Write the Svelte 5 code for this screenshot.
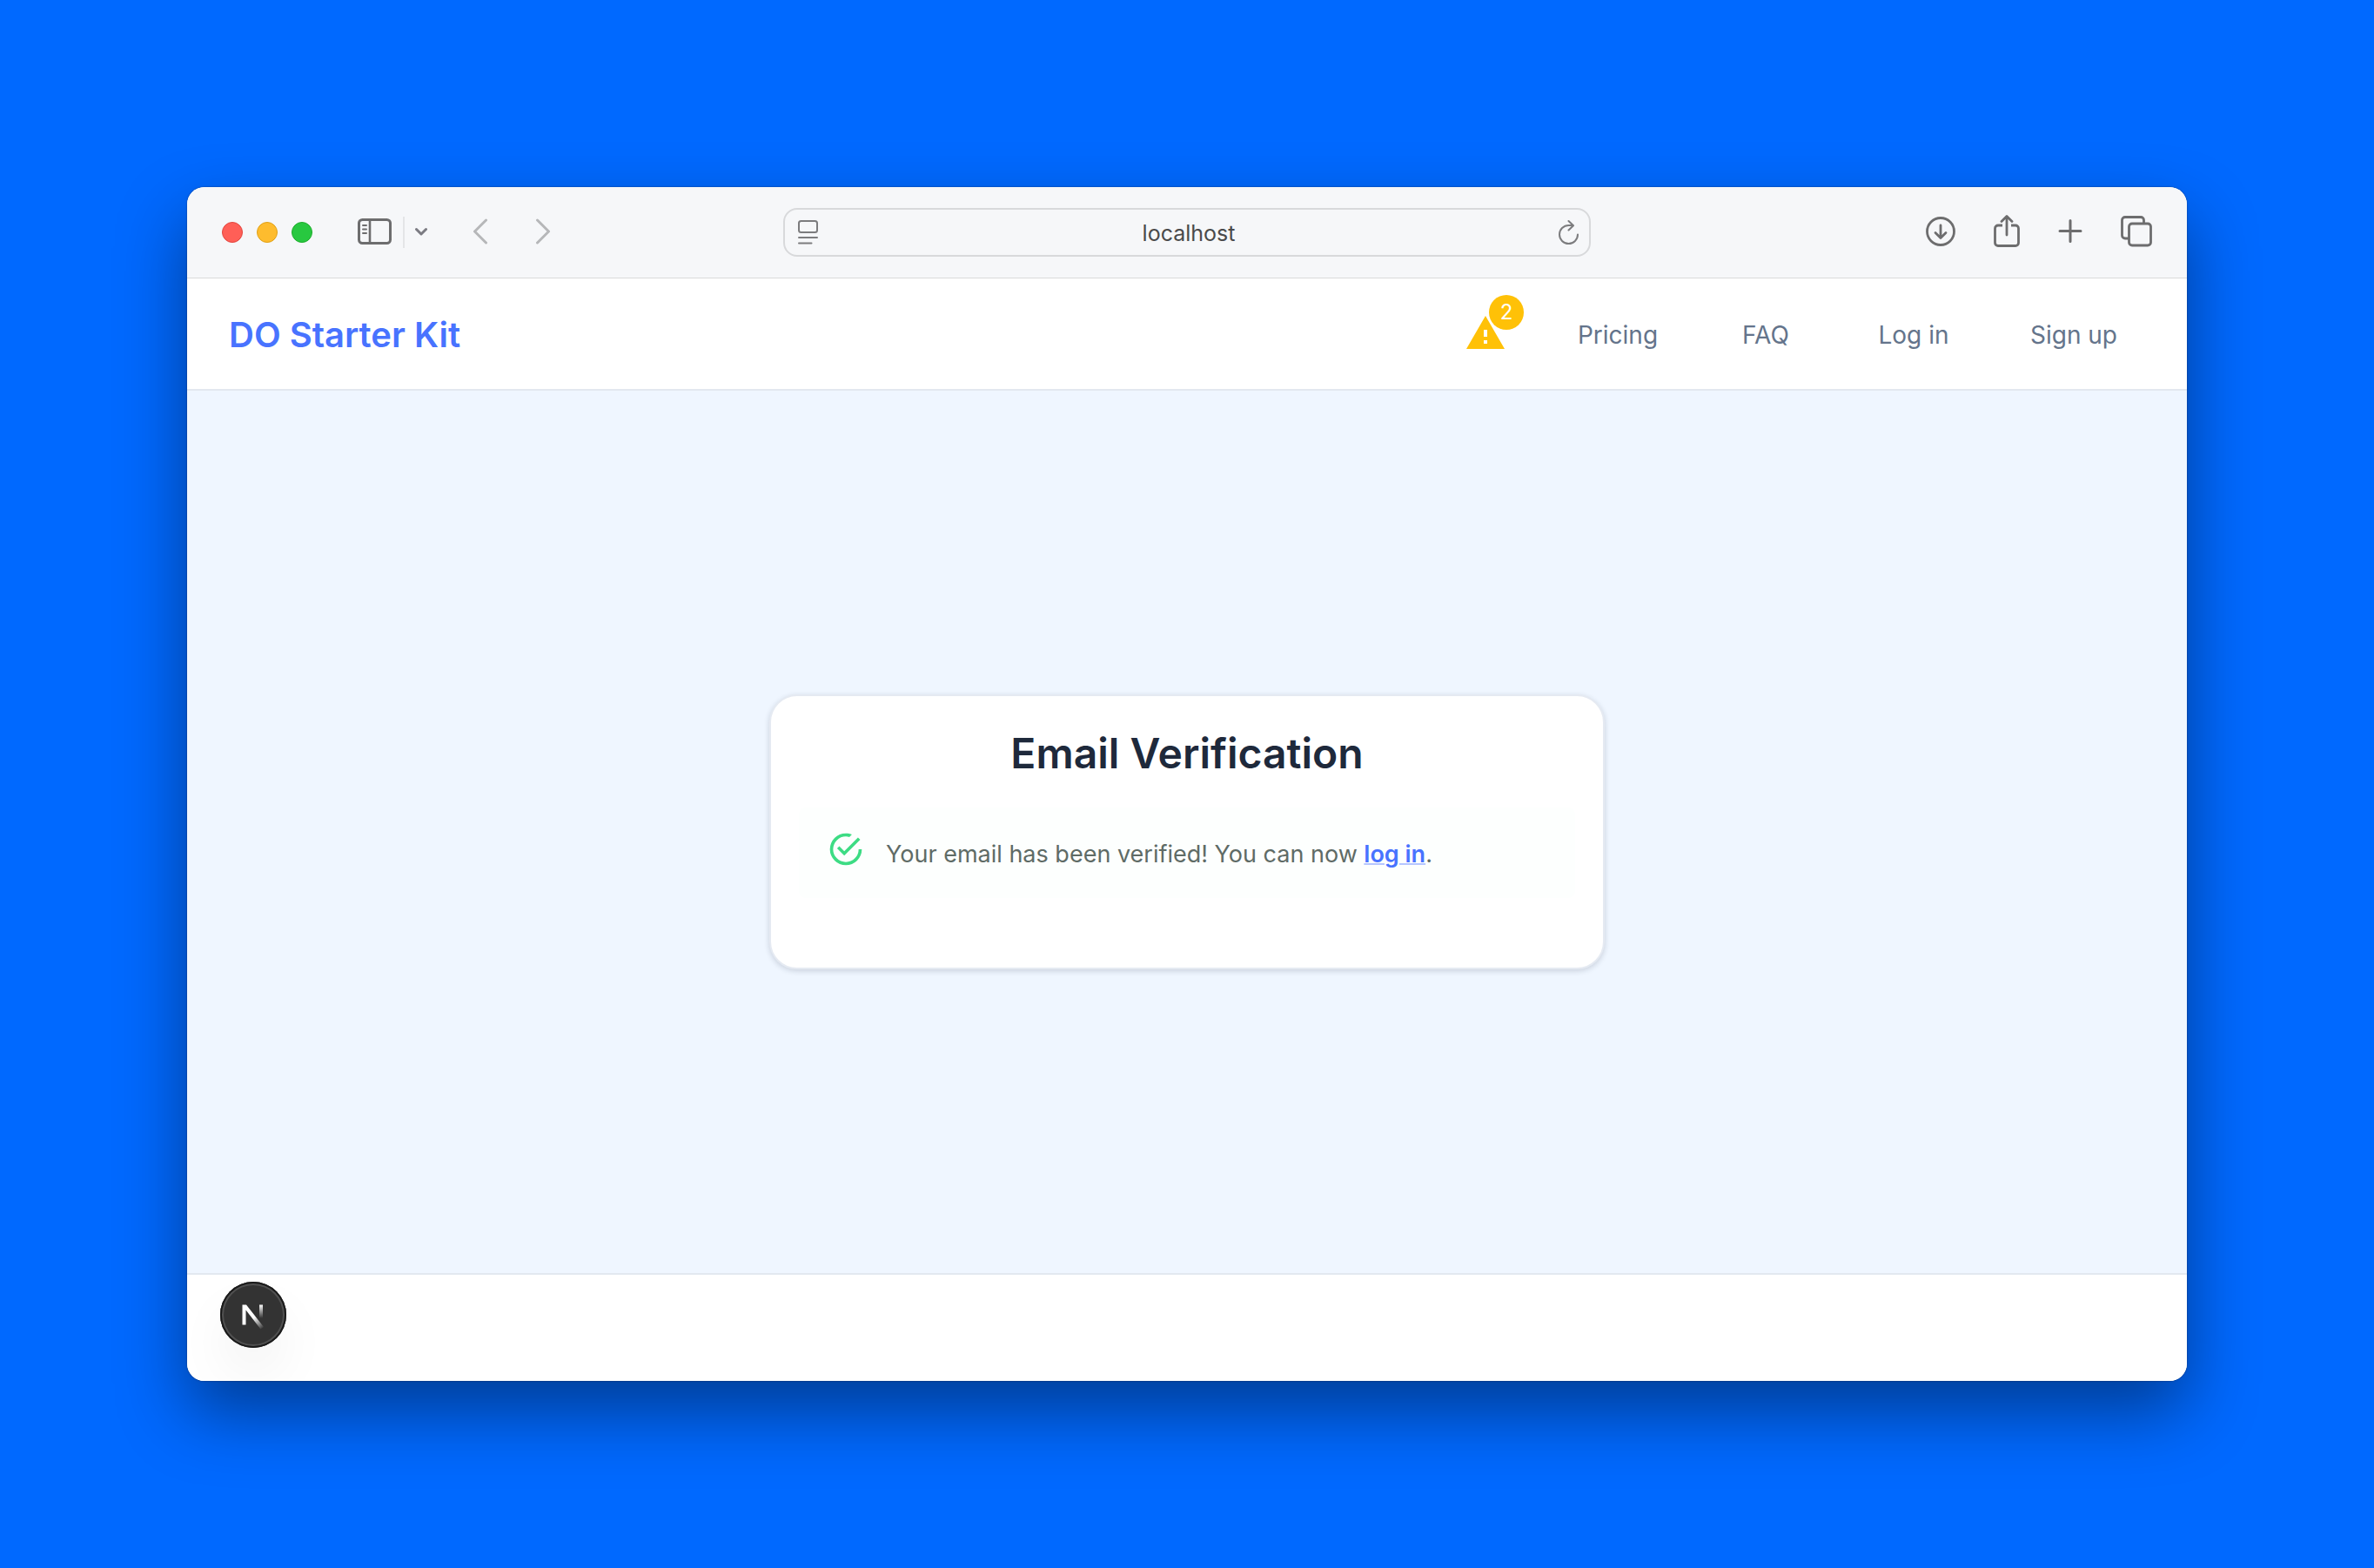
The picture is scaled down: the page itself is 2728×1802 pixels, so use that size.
<script>
  let address = $state('localhost');
  const notices = 2;
  const email = 'Your email has been verified! You can now';
</script>

<div class="desktop">
  <div class="window">
    <div class="toolbar">
      <div class="tools">
        <div class="lights">
          <button class="light red" aria-label="Close"></button>
          <button class="light yellow" aria-label="Minimize"></button>
          <button class="light green" aria-label="Zoom"></button>
        </div>
        <div class="sidebar-tools">
          <button class="icon" aria-label="Show sidebar">
            <svg width="40" height="32" viewBox="0 0 40 32" fill="none" stroke="#6d6d6e" stroke-linecap="round">
              <rect x="1.5" y="2.5" width="36" height="27" rx="4" stroke-width="3" />
              <path d="M14 3v26" stroke-width="2.6" />
              <path d="M6 9h4M6 13.500h4M6 18h4" stroke-width="2" />
            </svg>
          </button>
          <span class="divider"></span>
          <button class="icon" aria-label="Sidebar options">
            <svg width="14" height="12" viewBox="0 0 14 12" fill="none" stroke="#7b7b82" stroke-width="3" stroke-linecap="round" stroke-linejoin="round">
              <path d="M1.500 3.500l5.500 5.500 5.500-5.500" />
            </svg>
          </button>
        </div>
        <div class="history">
          <button class="icon" aria-label="Back">
            <svg width="18" height="30" viewBox="0 0 18 30" fill="none" stroke="#b6b7b9" stroke-width="3" stroke-linecap="round" stroke-linejoin="round">
              <path d="M15.500 2L2.500 15l13 13" />
            </svg>
          </button>
          <button class="icon" aria-label="Forward">
            <svg width="18" height="30" viewBox="0 0 18 30" fill="none" stroke="#b6b7b9" stroke-width="3" stroke-linecap="round" stroke-linejoin="round">
              <path d="M2.500 2l13 13-13 13" />
            </svg>
          </button>
        </div>
      </div>

      <div class="address">
        <button aria-label="Page settings">
          <svg width="24" height="28" viewBox="0 0 24 28" fill="none" stroke="#7c7c7e" stroke-width="2" stroke-linecap="round">
            <rect x="1" y="1" width="21" height="13" rx="2.500" />
            <path d="M1 20h21M1 26.500h14.500" />
          </svg>
        </button>
        <input aria-label="Address" bind:value={address} />
        <button aria-label="Reload">
          <svg width="24" height="30" viewBox="0 0 24 30" fill="none" stroke="#7c7c7e" stroke-width="2" stroke-linecap="round" stroke-linejoin="round">
            <path d="M22 17.500A10.500 10.500 0 1 1 11.500 7h4.500" />
            <path d="M11.500 2l5.500 5.200-5.500 5.300" />
          </svg>
        </button>
      </div>

      <div class="tools actions">
        <button class="icon" aria-label="Downloads">
          <svg width="34" height="38" viewBox="0 0 34 38" fill="none" stroke="#6d6d6e" stroke-width="2.800" stroke-linecap="round" stroke-linejoin="round">
            <circle cx="17" cy="19" r="15.500" />
            <path d="M17 12v14M11 20.500l6 6 6-6" />
          </svg>
        </button>
        <button class="icon" aria-label="Share">
          <svg width="30" height="38" viewBox="0 0 30 38" fill="none" stroke="#6d6d6e" stroke-width="2.800" stroke-linecap="round" stroke-linejoin="round">
            <path d="M10 12H5a3.500 3.500 0 0 0-3.500 3.500V32A3.500 3.500 0 0 0 5 35.500h20a3.500 3.500 0 0 0 3.500-3.500V15.500A3.500 3.500 0 0 0 25 12h-5" stroke-linecap="butt" />
            <path d="M15 23V2M9 7.500L15 1.500l6 6" />
          </svg>
        </button>
        <button class="icon" aria-label="New tab">
          <svg width="28" height="38" viewBox="0 0 28 38" fill="none" stroke="#6d6d6e" stroke-width="3" stroke-linecap="round">
            <path d="M14 6.500v24M2 18.500h24" />
          </svg>
        </button>
        <button class="icon" aria-label="Tab overview">
          <svg width="36" height="38" viewBox="0 0 36 38" fill="none" stroke="#6d6d6e" stroke-width="2.800">
            <path d="M9 27H5a3.500 3.500 0 0 1-3.500-3.500V6A3.500 3.500 0 0 1 5 2.500h18A3.500 3.500 0 0 1 26.500 6v3.500" />
            <rect x="9.500" y="10" width="25" height="25" rx="3.500" />
          </svg>
        </button>
      </div>
    </div>

    <header>
      <a class="brand" href="#home">DO Starter Kit</a>
      <nav>
        <button class="alerts" aria-label="Configuration warnings">
          <svg width="48" height="48" viewBox="0 0 24 24" fill="#ffc107">
            <path d="M1 21h22L12 2 1 21zm12-3h-2v-2h2v2zm0-4h-2v-4h2v4z" />
          </svg>
          <span class="badge">{notices}</span>
        </button>
        <div class="links">
          <a href="#pricing">Pricing</a>
          <a href="#faq">FAQ</a>
          <a href="#login">Log in</a>
        </div>
        <a href="#signup">Sign up</a>
      </nav>
    </header>

    <main>
      <section class="card">
        <h1>Email Verification</h1>
        <div class="message" role="status">
          <svg width="44" height="44" viewBox="0 0 24 24" fill="#3ddc84">
            <path d="M20,12A8,8 0 0,1 12,20A8,8 0 0,1 4,12A8,8 0 0,1 12,4C12.76,4 13.5,4.11 14.2,4.31L15.77,2.74C14.61,2.26 13.34,2 12,2A10,10 0 0,0 2,12A10,10 0 0,0 12,22A10,10 0 0,0 22,12M7.91,10.08L6.5,11.5L11,16L21,6L19.59,4.58L11,13.17L7.91,10.08Z" />
          </svg>
          <p>{email} <a href="#login">log in</a>.</p>
        </div>
      </section>
    </main>

    <footer>
      <button class="devtools" aria-label="Open dev tools">
        <svg width="76" height="76" viewBox="0 0 76 76" fill="none">
          <defs>
            <linearGradient id="diagonal" gradientUnits="userSpaceOnUse" x1="39" y1="41" x2="49" y2="54">
              <stop stop-color="#fff" />
              <stop offset="1" stop-color="#fff" stop-opacity="0" />
            </linearGradient>
            <linearGradient id="stem" gradientUnits="userSpaceOnUse" x1="47" y1="26" x2="47" y2="42">
              <stop stop-color="#fff" />
              <stop offset="1" stop-color="#fff" stop-opacity="0" />
            </linearGradient>
          </defs>
          <path d="M25.500 49.500V26.500h4.500L50 52l-3.500 2.500L29.500 32.500v17z" fill="url(#diagonal)" />
          <path d="M45 26.500h4V42h-4z" fill="url(#stem)" />
        </svg>
      </button>
    </footer>
  </div>
</div>

<style>
  :global(body) {
    margin: 0;
    background: #0069ff;
  }
  .desktop {
    box-sizing: border-box;
    min-height: 100vh;
    padding: 215px;
    display: flex;
    background: #0069ff;
    font-family: Inter, 'Liberation Sans', sans-serif;
  }
  .window {
    flex: 1;
    min-width: 0;
    display: flex;
    flex-direction: column;
    overflow: hidden;
    border-radius: 20px;
    background: #fff;
    box-shadow:
      0 0 2px rgba(0, 0, 0, 0.5),
      0 36px 80px rgba(0, 0, 0, 0.42);
  }
  button {
    padding: 0;
    border: 0;
    background: none;
    font: inherit;
    cursor: pointer;
  }
  svg {
    display: block;
  }
  a {
    text-decoration: none;
  }
  .toolbar {
    box-sizing: border-box;
    display: grid;
    grid-template-columns: minmax(0, 1fr) minmax(0, 928px) minmax(0, 1fr);
    align-items: center;
    padding: 24px 40px;
    border-bottom: 1px solid #d9dadb;
    background: #f6f7f9;
  }
  .tools,
  .lights,
  .sidebar-tools,
  .history {
    display: flex;
    align-items: center;
  }
  .tools {
    gap: 52px;
  }
  .icon {
    padding-bottom: 2px;
  }
  .lights {
    gap: 16px;
  }
  .light {
    box-sizing: border-box;
    width: 24px;
    height: 24px;
    border-radius: 50%;
  }
  .red {
    background: #ff5f57;
    border: 1px solid #e2463f;
  }
  .yellow {
    background: #febc2e;
    border: 1px solid #e1a116;
  }
  .green {
    background: #28c840;
    border: 1px solid #1dad2b;
  }
  .sidebar-tools {
    gap: 12px;
  }
  .divider {
    width: 2px;
    height: 36px;
    background: #e4e5e7;
  }
  .history {
    gap: 54px;
  }
  .address {
    box-sizing: border-box;
    height: 56px;
    display: flex;
    align-items: center;
    padding: 0 11px 0 15px;
    border: 2px solid #d8d9db;
    border-radius: 16px;
  }
  .address input {
    flex: 1;
    min-width: 0;
    padding: 2px 0 0;
    border: 0;
    outline: 0;
    background: none;
    color: #4a4a4b;
    font: 400 25px/32px Inter, 'Liberation Sans', sans-serif;
    text-align: center;
  }
  .actions {
    justify-content: flex-end;
    gap: 44px;
  }
  header {
    display: flex;
    align-items: center;
    justify-content: space-between;
    padding: 33px 66px 30px 48px;
    border-bottom: 2px solid #e2e8f0;
  }
  .brand {
    color: #4873ff;
    font-size: 40px;
    font-weight: 600;
    line-height: 64px;
  }
  nav {
    display: flex;
    align-items: center;
    gap: 56px;
  }
  nav a {
    min-width: 128px;
    color: #64748b;
    font-size: 28px;
    line-height: 48px;
    text-align: center;
  }
  .links {
    display: flex;
    gap: 42px;
  }
  .alerts {
    position: relative;
    margin: 0 8px 4px 0;
  }
  .badge {
    position: absolute;
    top: -20px;
    right: -20px;
    width: 40px;
    height: 40px;
    border-radius: 50%;
    background: #ffc107;
    color: #fff;
    font-size: 24px;
    line-height: 40px;
    text-align: center;
  }
  main {
    flex: 1;
    display: flex;
    align-items: center;
    justify-content: center;
    background: #eff6ff;
  }
  .card {
    box-sizing: border-box;
    width: 100%;
    max-width: 960px;
    padding: 34px 32px 80px;
    border: 2px solid #e5eaf2;
    border-radius: 32px;
    background: #fff;
    box-shadow: 0 2px 6px rgba(30, 41, 59, 0.18);
  }
  h1 {
    margin: 0 0 30px;
    color: #1e293b;
    font-size: 48px;
    font-weight: 600;
    line-height: 64px;
    text-align: center;
  }
  .message {
    display: flex;
    align-items: flex-start;
    gap: 24px;
    padding: 26px 32px;
    border-radius: 8px;
    background: #fdfffe;
  }
  p {
    margin: 0;
    padding: 8px 0 4px;
    color: #5f6b66;
    font-size: 27px;
    line-height: 40px;
  }
  p a {
    color: #4873ff;
    font-weight: 600;
    text-decoration: underline;
    text-decoration-color: #b5c6ff;
    text-decoration-thickness: 2px;
  }
  footer {
    padding: 8px 38px 38px;
    border-top: 2px solid #e2e8f0;
    background: #fff;
  }
  .devtools {
    display: block;
    border-radius: 50%;
    background: #333;
    box-shadow:
      inset 0 0 0 2px #1a1a1a,
      inset 0 0 0 4px #505050,
      0 32px 64px -8px rgba(0, 0, 0, 0.08);
  }
</style>
